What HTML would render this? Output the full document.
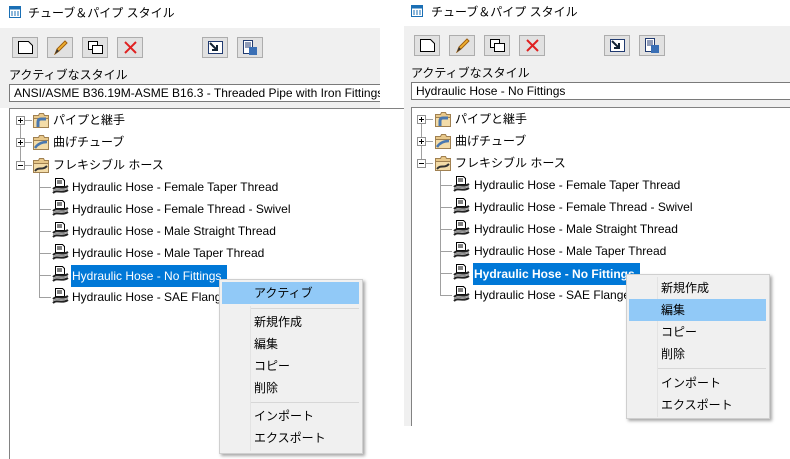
<!DOCTYPE html>
<html><head><meta charset="utf-8"><style>
*{margin:0;padding:0;box-sizing:border-box}
body{width:790px;height:459px;background:#fff;position:relative;overflow:hidden;font-family:"Liberation Sans","Noto Sans CJK JP",sans-serif;font-size:12px;color:#000}
.p{position:absolute}
.a{position:absolute;white-space:nowrap}
.btn{position:absolute;top:37px;width:26px;height:21px;background:#e1e1e1;border:1px solid #adadad}
.btn svg{position:absolute;left:4px;top:2px}
.row{position:absolute;height:18px;line-height:18px;white-space:nowrap}
.pm{position:absolute;width:9px;height:9px;border:1px solid #919191;background:#fff}
.pm:before{content:"";position:absolute;left:1px;top:3px;width:5px;height:1px;background:#000}
.pm.plus:after{content:"";position:absolute;left:3px;top:1px;width:1px;height:5px;background:#000}
.vl{position:absolute;width:1px;background:#a0a0a0}
.hl{position:absolute;height:1px;background:#a0a0a0}
.menu{position:absolute;background:#f0f0f0;border:1px solid #cfcfcf;box-shadow:2px 2px 3px rgba(0,0,0,.35)}
.mi{position:absolute;height:22px;line-height:22px;white-space:nowrap}
.sep{position:absolute;height:1px;background:#d7d7d7}
</style></head><body>

<!-- LEFT PANEL -->
<div class="p" style="left:0;top:0;width:404px;height:459px">
 <svg class="a" style="left:9px;top:6px" width="12" height="12"><rect x="0.5" y="0.5" width="11" height="11" fill="#fff" stroke="#1a6fb5"/><rect x="0.5" y="0.5" width="11" height="3" fill="#1a6fb5"/><path d="M3 5v5M6 5v5M9 5v5" stroke="#1a6fb5"/></svg>
 <div class="a" style="left:28px;top:5px;line-height:16px">チューブ＆パイプ スタイル</div>
 <div class="a" style="left:0;top:28px;width:380px;height:80px;background:#f0f0f0"></div>
 <div class="btn" style="left:12px"><svg width="17" height="15"><path d="M1.5 1.5h10l4 4v8h-14z" fill="#fff" stroke="#000"/></svg></div>
 <div class="btn" style="left:47px"><svg width="17" height="15"><path d="M3 14l2-5 8-8 2 2-8 8z" fill="#f0b030" stroke="#a06010"/><path d="M3 14l2-5 2 2z" fill="#333"/></svg></div>
 <div class="btn" style="left:82px"><svg width="17" height="15"><rect x="1.5" y="1.5" width="9" height="8" fill="#fff" stroke="#000"/><rect x="5.5" y="5.5" width="10" height="8" fill="#fff" stroke="#000"/></svg></div>
 <div class="btn" style="left:117px"><svg width="17" height="15"><path d="M3 2l11 11M14 2L3 13" stroke="#e02020" stroke-width="2"/></svg></div>
 <div class="btn" style="left:202px"><svg width="17" height="15"><rect x="1.5" y="1.5" width="14" height="12" fill="#fff" stroke="#203a70"/><path d="M3 3l7 7M10 5v5H5" stroke="#123" stroke-width="2" fill="none"/></svg></div>
 <div class="btn" style="left:237px"><svg width="17" height="15"><rect x="1.5" y="0.5" width="9" height="13" fill="#fff" stroke="#203a70"/><path d="M3 3h6M3 5h6M3 7h6" stroke="#203a70"/><rect x="7" y="7" width="8" height="8" fill="#3a6fb5"/></svg></div>
 <div class="a" style="left:9px;top:67px;line-height:16px">アクティブなスタイル</div>
 <div class="a" style="left:9px;top:84px;width:371px;height:18px;border:1px solid #7a7a7a;border-right:none;background:#fff;line-height:16px;padding-left:4px;overflow:hidden">ANSI/ASME B36.19M-ASME B16.3 - Threaded Pipe with Iron Fittings</div>
 <div class="a" style="left:9px;top:108px;width:395px;height:351px;border-left:1px solid #828282;border-top:1px solid #828282;background:#fff"></div>
</div>

<!-- RIGHT PANEL -->
<div class="p" style="left:401px;top:-2px;width:389px;height:430px">
 <div class="a" style="left:3px;top:28px;width:386px;height:400px;background:#f0f0f0"></div>
 <svg class="a" style="left:10px;top:7px" width="12" height="12"><rect x="0.5" y="0.5" width="11" height="11" fill="#fff" stroke="#1a6fb5"/><rect x="0.5" y="0.5" width="11" height="3" fill="#1a6fb5"/><path d="M3 5v5M6 5v5M9 5v5" stroke="#1a6fb5"/></svg>
 <div class="a" style="left:30px;top:6px;line-height:16px">チューブ＆パイプ スタイル</div>
 <div class="btn" style="left:13px"><svg width="17" height="15"><path d="M1.5 1.5h10l4 4v8h-14z" fill="#fff" stroke="#000"/></svg></div>
 <div class="btn" style="left:48px"><svg width="17" height="15"><path d="M3 14l2-5 8-8 2 2-8 8z" fill="#f0b030" stroke="#a06010"/><path d="M3 14l2-5 2 2z" fill="#333"/></svg></div>
 <div class="btn" style="left:83px"><svg width="17" height="15"><rect x="1.5" y="1.5" width="9" height="8" fill="#fff" stroke="#000"/><rect x="5.5" y="5.5" width="10" height="8" fill="#fff" stroke="#000"/></svg></div>
 <div class="btn" style="left:118px"><svg width="17" height="15"><path d="M3 2l11 11M14 2L3 13" stroke="#e02020" stroke-width="2"/></svg></div>
 <div class="btn" style="left:203px"><svg width="17" height="15"><rect x="1.5" y="1.5" width="14" height="12" fill="#fff" stroke="#203a70"/><path d="M3 3l7 7M10 5v5H5" stroke="#123" stroke-width="2" fill="none"/></svg></div>
 <div class="btn" style="left:238px"><svg width="17" height="15"><rect x="1.5" y="0.5" width="9" height="13" fill="#fff" stroke="#203a70"/><path d="M3 3h6M3 5h6M3 7h6" stroke="#203a70"/><rect x="7" y="7" width="8" height="8" fill="#3a6fb5"/></svg></div>
 <div class="a" style="left:10px;top:67px;line-height:16px">アクティブなスタイル</div>
 <div class="a" style="left:10px;top:84px;width:379px;height:18px;border:1px solid #7a7a7a;border-right:none;background:#fff;line-height:16px;padding-left:4px">Hydraulic Hose - No Fittings</div>
 <div class="a" style="left:10px;top:109px;width:379px;height:319px;border-left:1px solid #828282;border-top:1px solid #828282;background:#fff"></div>
</div>

<div class="p" style="left:0;top:0">
 <div class="vl" style="left:20px;top:124px;height:41px"></div>
 <div class="pm plus" style="left:16px;top:116px"></div><div class="hl" style="left:25px;top:120px;width:7px"></div>
 <div class="pm plus" style="left:16px;top:138px"></div><div class="hl" style="left:25px;top:142px;width:7px"></div>
 <div class="pm" style="left:16px;top:161px"></div><div class="hl" style="left:25px;top:165px;width:7px"></div>
 <div class="vl" style="left:39px;top:172px;height:126px"></div>
 <div class="hl" style="left:39px;top:187px;width:12px"></div><div class="hl" style="left:39px;top:209px;width:12px"></div><div class="hl" style="left:39px;top:231px;width:12px"></div><div class="hl" style="left:39px;top:253px;width:12px"></div><div class="hl" style="left:39px;top:275px;width:12px"></div><div class="hl" style="left:39px;top:297px;width:12px"></div>
</div>
<div class="p" style="left:401px;top:-1px">
 <div class="vl" style="left:20px;top:124px;height:41px"></div>
 <div class="pm plus" style="left:16px;top:116px"></div><div class="hl" style="left:25px;top:120px;width:7px"></div>
 <div class="pm plus" style="left:16px;top:138px"></div><div class="hl" style="left:25px;top:142px;width:7px"></div>
 <div class="pm" style="left:16px;top:160px"></div><div class="hl" style="left:25px;top:164px;width:7px"></div>
 <div class="vl" style="left:39px;top:172px;height:125px"></div>
 <div class="hl" style="left:39px;top:186px;width:12px"></div><div class="hl" style="left:39px;top:208px;width:12px"></div><div class="hl" style="left:39px;top:230px;width:12px"></div><div class="hl" style="left:39px;top:252px;width:12px"></div><div class="hl" style="left:39px;top:274px;width:12px"></div><div class="hl" style="left:39px;top:296px;width:12px"></div>
</div>

<svg width="0" height="0" style="position:absolute">
 <defs>
  <g id="fold"><path d="M0.5 3.5h5l1-2h4l1 2h4v12h-15z" fill="#e8c88a" stroke="#a08050"/><path d="M0.5 6.5h15v9h-15z" fill="#f3dca8" stroke="#a08050"/></g>
  <g id="hose"><path d="M3.5 0.5h7l2 2v6h-9z" fill="#fff" stroke="#000"/><path d="M5 3h5M5 5h5" stroke="#000"/><path d="M1 11c4-4 9 1 15-3M1 15c4-4 9 1 15-3" stroke="#222" stroke-width="2" fill="none"/><path d="M1 13c4-4 9 1 15-3" stroke="#888" stroke-width="1" fill="none"/></g>
 </defs>
</svg>

<svg class="a" style="left:33px;top:112px" width="16" height="17"><use href="#fold"/><path d="M5 15V10q0-3 3-3h5" stroke="#4a78b0" stroke-width="3" fill="none"/></svg>
<div class="row" style="left:53px;top:111px">パイプと継手</div>
<svg class="a" style="left:33px;top:134px" width="16" height="17"><use href="#fold"/><path d="M2 14q4-6 12-6" stroke="#4a78b0" stroke-width="2.5" fill="none"/></svg>
<div class="row" style="left:53px;top:133px">曲げチューブ</div>
<svg class="a" style="left:33px;top:157px" width="16" height="17"><use href="#fold"/><path d="M2 14c4-5 7 0 12-5" stroke="#333" stroke-width="2" fill="none"/></svg>
<div class="row" style="left:53px;top:156px">フレキシブル ホース</div>

<svg class="a" style="left:52px;top:178px" width="17" height="18"><use href="#hose"/></svg><div class="row" style="left:72px;top:178px">Hydraulic Hose - Female Taper Thread</div>
<svg class="a" style="left:52px;top:200px" width="17" height="18"><use href="#hose"/></svg><div class="row" style="left:72px;top:200px">Hydraulic Hose - Female Thread - Swivel</div>
<svg class="a" style="left:52px;top:222px" width="17" height="18"><use href="#hose"/></svg><div class="row" style="left:72px;top:222px">Hydraulic Hose - Male Straight Thread</div>
<svg class="a" style="left:52px;top:244px" width="17" height="18"><use href="#hose"/></svg><div class="row" style="left:72px;top:244px">Hydraulic Hose - Male Taper Thread</div>
<svg class="a" style="left:52px;top:266px" width="17" height="18"><use href="#hose"/></svg><div class="row" style="left:71px;top:265px;height:22px;line-height:22px;width:156px;background:#0078d7;color:#fff;padding-left:1px">Hydraulic Hose - No Fittings</div>
<svg class="a" style="left:52px;top:288px" width="17" height="18"><use href="#hose"/></svg><div class="row" style="left:72px;top:288px">Hydraulic Hose - SAE Flange</div>

<svg class="a" style="left:435px;top:111px" width="16" height="17"><use href="#fold"/><path d="M5 15V10q0-3 3-3h5" stroke="#4a78b0" stroke-width="3" fill="none"/></svg>
<div class="row" style="left:455px;top:110px">パイプと継手</div>
<svg class="a" style="left:435px;top:133px" width="16" height="17"><use href="#fold"/><path d="M2 14q4-6 12-6" stroke="#4a78b0" stroke-width="2.5" fill="none"/></svg>
<div class="row" style="left:455px;top:132px">曲げチューブ</div>
<svg class="a" style="left:435px;top:155px" width="16" height="17"><use href="#fold"/><path d="M2 14c4-5 7 0 12-5" stroke="#333" stroke-width="2" fill="none"/></svg>
<div class="row" style="left:455px;top:154px">フレキシブル ホース</div>

<svg class="a" style="left:453px;top:176px" width="17" height="18"><use href="#hose"/></svg><div class="row" style="left:474px;top:176px">Hydraulic Hose - Female Taper Thread</div>
<svg class="a" style="left:453px;top:198px" width="17" height="18"><use href="#hose"/></svg><div class="row" style="left:474px;top:198px">Hydraulic Hose - Female Thread - Swivel</div>
<svg class="a" style="left:453px;top:220px" width="17" height="18"><use href="#hose"/></svg><div class="row" style="left:474px;top:220px">Hydraulic Hose - Male Straight Thread</div>
<svg class="a" style="left:453px;top:242px" width="17" height="18"><use href="#hose"/></svg><div class="row" style="left:474px;top:242px">Hydraulic Hose - Male Taper Thread</div>
<svg class="a" style="left:453px;top:264px" width="17" height="18"><use href="#hose"/></svg><div class="row" style="left:473px;top:263px;height:22px;line-height:22px;width:167px;background:#0078d7;color:#fff;font-weight:bold;padding-left:1px">Hydraulic Hose - No Fittings</div>
<svg class="a" style="left:453px;top:286px" width="17" height="18"><use href="#hose"/></svg><div class="row" style="left:474px;top:286px">Hydraulic Hose - SAE Flange</div>

<div class="menu" style="left:219px;top:279px;width:144px;height:175px">
 <div class="mi" style="left:2px;top:2px;width:137px;background:#91c9f7"></div>
 <div class="vl" style="left:30px;top:26px;height:145px;background:#e3e3e3"></div>
 <div class="mi" style="left:34px;top:2px">アクティブ</div>
 <div class="sep" style="left:31px;top:28px;width:108px"></div>
 <div class="mi" style="left:34px;top:31px">新規作成</div>
 <div class="mi" style="left:34px;top:53px">編集</div>
 <div class="mi" style="left:34px;top:75px">コピー</div>
 <div class="mi" style="left:34px;top:97px">削除</div>
 <div class="sep" style="left:31px;top:122px;width:108px"></div>
 <div class="mi" style="left:34px;top:125px">インポート</div>
 <div class="mi" style="left:34px;top:147px">エクスポート</div>
</div>

<div class="menu" style="left:626px;top:274px;width:144px;height:145px">
 <div class="vl" style="left:30px;top:2px;height:140px;background:#e3e3e3"></div>
 <div class="mi" style="left:2px;top:24px;width:137px;background:#91c9f7"></div>
 <div class="mi" style="left:34px;top:2px">新規作成</div>
 <div class="mi" style="left:34px;top:24px">編集</div>
 <div class="mi" style="left:34px;top:46px">コピー</div>
 <div class="mi" style="left:34px;top:68px">削除</div>
 <div class="sep" style="left:31px;top:93px;width:108px"></div>
 <div class="mi" style="left:34px;top:97px">インポート</div>
 <div class="mi" style="left:34px;top:119px">エクスポート</div>
</div>
</body></html>
